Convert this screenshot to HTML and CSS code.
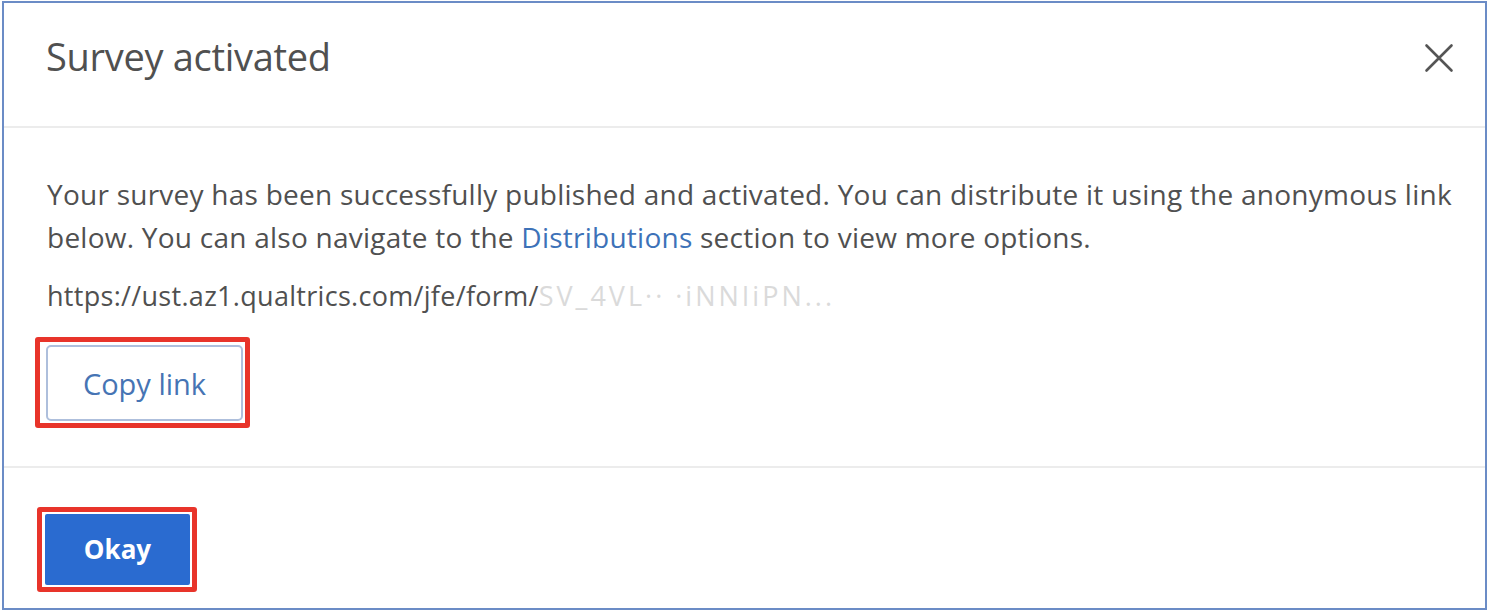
FILE: index.html
```html
<!DOCTYPE html>
<html>
<head>
<meta charset="utf-8">
<link rel="stylesheet" href="styles.css">
</head>
<body>
<div class="frame">
  <div class="dialog-header">
    <h1 class="title">Survey activated</h1>
    <button class="close" aria-label="Close">
      <svg width="30" height="30" viewBox="0 0 30 30"><path d="M2.5 2.5 L27.5 27.5 M27.5 2.5 L2.5 27.5" stroke="#555" stroke-width="2.6" stroke-linecap="round" fill="none"/></svg>
    </button>
  </div>
  <div class="dialog-body">
    <p class="message">Your survey has been successfully published and activated. You can distribute it using the anonymous link below. You can also navigate to the <a class="link">Distributions</a> section to view more options.</p>
    <p class="url">https://ust.az1.qualtrics.com/jfe/form/<span class="redacted">SV_4VL·· ·iNNIiPN...</span></p>
    <div class="highlight highlight-copy">
      <button class="btn-secondary">Copy link</button>
    </div>
  </div>
  <div class="dialog-footer">
    <div class="highlight highlight-ok">
      <button class="btn-primary">Okay</button>
    </div>
  </div>
</div>
</body>
</html>
```
FILE: styles.css
```css
html, body {
  margin: 0;
  padding: 0;
  background: #ffffff;
}
body {
  padding: 1px 0 0 2px;
  font-family: "Open Sans", "Noto Sans", sans-serif;
  color: #4f4f4f;
}
.frame {
  box-sizing: border-box;
  width: 1485px;
  height: 609px;
  border: 2px solid #6b8cc6;
  display: flex;
  flex-direction: column;
}
.dialog-header {
  height: 125px;
  flex: none;
  box-sizing: border-box;
  border-bottom: 2px solid #ececec;
  display: flex;
  align-items: center;
  justify-content: space-between;
  padding: 0 31px 0 42px;
}
.title {
  margin: 0 0 18px 0;
  font-size: 38px;
  font-weight: 400;
  color: #505050;
  letter-spacing: -0.3px;
}
.close {
  border: 0;
  background: none;
  padding: 0;
  width: 30px;
  height: 30px;
  margin-bottom: 14px;
}
.dialog-body {
  height: 340px;
  flex: none;
  box-sizing: border-box;
  border-bottom: 2px solid #ececec;
  padding: 45px 16px 0 43px;
}
.message {
  margin: 0;
  font-size: 28px;
  line-height: 43px;
  letter-spacing: 0.25px;
  color: #505050;
}
.link {
  color: #3d72b8;
}
.url {
  margin: 22px 0 0 0;
  font-size: 27px;
  line-height: 30px;
  letter-spacing: 0.3px;
  color: #505050;
  white-space: nowrap;
}
.redacted {
  color: #dadada;
  letter-spacing: 3px;
}
.highlight {
  box-sizing: border-box;
  border: 5px solid #e8342a;
  border-radius: 3px;
  display: inline-flex;
}
.highlight-copy {
  margin: 26px 0 0 -12px;
  width: 215px;
  height: 91px;
  padding: 3px 2px 2px 6px;
}
.btn-secondary {
  flex: 1;
  border: 2px solid #aebfdc;
  border-radius: 5px;
  background: #ffffff;
  font-family: inherit;
  font-size: 29px;
  color: #4674b4;
  padding: 0;
}
.dialog-footer {
  flex: 1;
  padding: 39px 0 0 33px;
}
.highlight-ok {
  width: 160px;
  height: 85px;
  padding: 2px 2px 2px 3px;
}
.btn-primary {
  flex: 1;
  border: 0;
  border-radius: 2px;
  background: #2a6bd0;
  color: #ffffff;
  font-family: inherit;
  font-weight: 700;
  font-size: 26px;
  padding: 0 0 2px 0;
}
```
